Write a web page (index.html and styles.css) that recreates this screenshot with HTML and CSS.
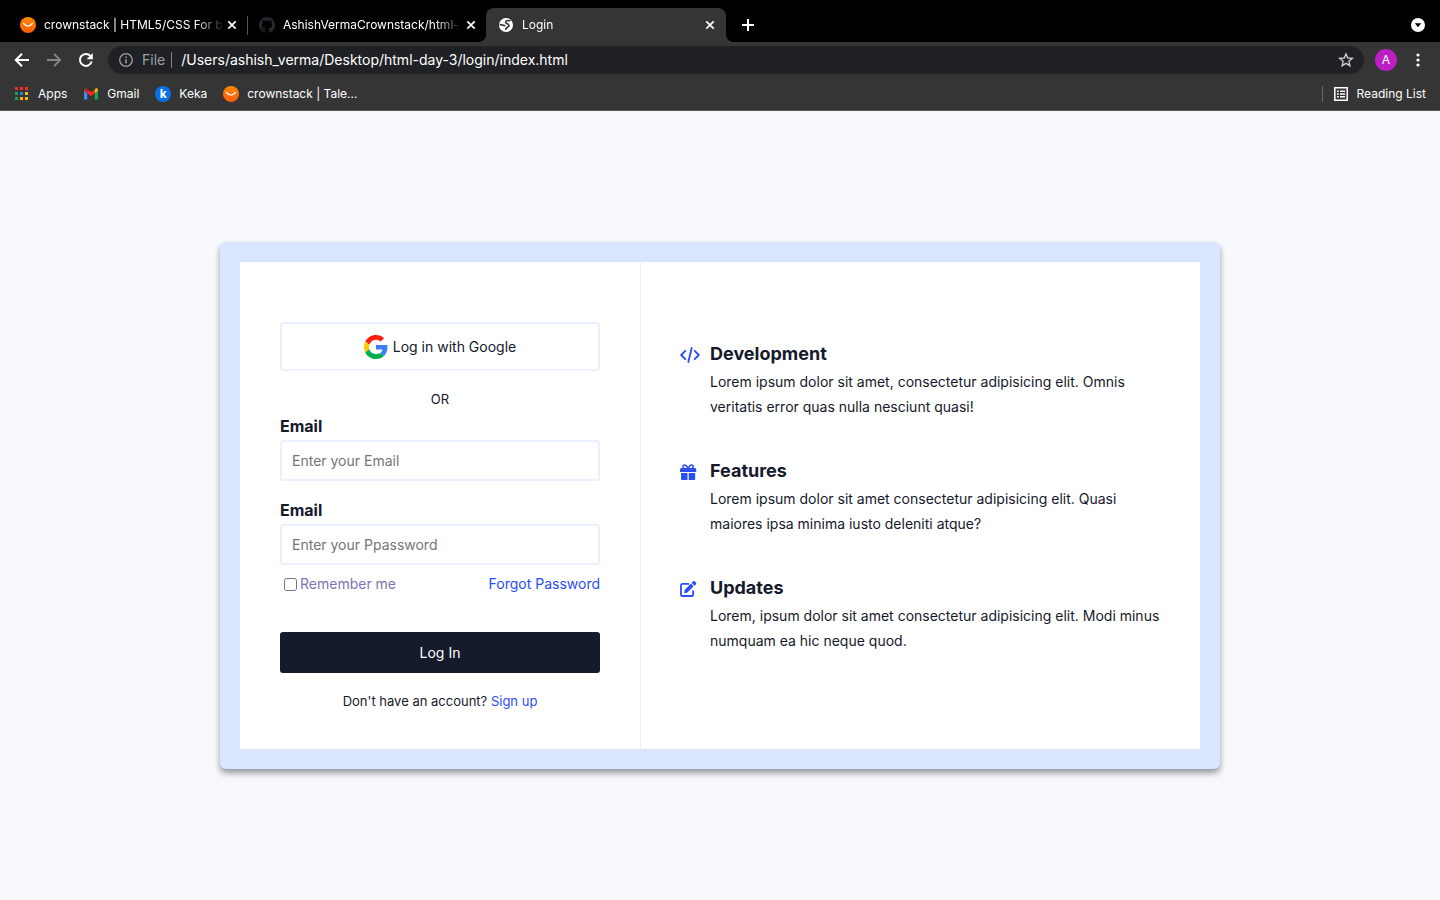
FILE: index.html
```html
<!DOCTYPE html>
<html lang="en">
<head>
<meta charset="utf-8">
<title>Login</title>
<link rel="stylesheet" href="styles.css">
</head>
<body>
<svg class="defs" width="0" height="0" aria-hidden="true">
  <defs>
    <linearGradient id="orange" x1="0" y1="0" x2="0" y2="1"><stop offset="0" stop-color="#ff8a00"/><stop offset="1" stop-color="#ff5a08"/></linearGradient>
    <symbol id="crown" viewBox="0 0 16 16"><circle cx="8" cy="8" r="8" fill="url(#orange)"/><path d="M3.600 6.500Q8 11.600 12.400 6.500" fill="none" stroke="#fff" stroke-width="1.300" stroke-linecap="round"/></symbol>
    <symbol id="close" viewBox="0 0 10 10"><path d="M1.300 1.300l7.400 7.400M8.700 1.300L1.300 8.700" stroke="currentColor" stroke-width="1.700" fill="none"/></symbol>
  </defs>
</svg>

<header class="browser">
  <div class="tabs">
    <div class="tab">
      <svg class="icon-16"><use href="#crown"/></svg>
      <span class="tab-title">crownstack | HTML5/CSS For b</span>
      <button class="bare" aria-label="Close tab"><svg class="icon-10"><use href="#close"/></svg></button>
    </div>
    <div class="tab tab-divided">
      <svg class="icon-16" viewBox="0 0 16 16"><path fill="#24292e" d="M8 0C3.580 0 0 3.580 0 8c0 3.540 2.290 6.530 5.470 7.590.4.070.55-.17.55-.38 0-.19-.01-.82-.01-1.490-2.010.37-2.530-.49-2.690-.94-.09-.23-.48-.94-.82-1.130-.28-.15-.68-.52-.01-.53.63-.01 1.080.58 1.230.82.72 1.210 1.870.87 2.330.66.07-.52.28-.87.51-1.070-1.780-.2-3.640-.89-3.640-3.950 0-.87.31-1.590.82-2.150-.08-.2-.36-1.020.08-2.120 0 0 .67-.21 2.200.82.64-.18 1.320-.27 2-.27s1.360.09 2 .27c1.530-1.040 2.200-.82 2.200-.82.44 1.100.16 1.920.08 2.120.51.56.82 1.270.82 2.150 0 3.070-1.870 3.750-3.650 3.950.29.25.54.73.54 1.480 0 1.070-.01 1.930-.01 2.200 0 .21.15.46.55.38A8.010 8.010 0 0 0 16 8c0-4.420-3.580-8-8-8z"/></svg>
      <span class="tab-title">AshishVermaCrownstack/html-</span>
      <button class="bare" aria-label="Close tab"><svg class="icon-10"><use href="#close"/></svg></button>
    </div>
    <div class="tab tab-active">
      <svg class="icon-16" viewBox="0 0 16 16"><circle cx="8" cy="8" r="7" fill="#fff"/><path d="M11.800 3.800C9.600 3 7.400 4 7.600 5.400c.2 1.500 3.600 1.200 3.400 3.200-.2 1.900-2.500 1.300-3.300 3.600" fill="none" stroke="#353535" stroke-width="1.600" stroke-linecap="round"/><path d="M2.400 7.600c1.600-.2 2 .9 4.200 1" fill="none" stroke="#353535" stroke-width="1.800" stroke-linecap="round"/></svg>
      <span class="tab-title">Login</span>
      <button class="bare" aria-label="Close tab"><svg class="icon-10"><use href="#close"/></svg></button>
    </div>
    <button class="bare new-tab" aria-label="New tab"><svg class="icon-12" viewBox="0 0 12 12"><path d="M6 0v12M0 6h12" stroke="#fff" stroke-width="2"/></svg></button>
    <button class="bare tab-search" aria-label="Search tabs"><svg class="icon-14" viewBox="0 0 14 14"><circle cx="7" cy="7" r="7" fill="#fff"/><path d="M3.800 5.200h6.400L7 9.200z" fill="#000"/></svg></button>
  </div>

  <div class="toolbar">
    <div class="nav-buttons">
      <button class="bare" aria-label="Back"><svg class="icon-16" viewBox="0 0 16 16"><path d="M15 8H2M8 1.800L1.800 8 8 14.200" fill="none" stroke="#fff" stroke-width="2"/></svg></button>
      <button class="bare" aria-label="Forward"><svg class="icon-16" viewBox="0 0 16 16"><path d="M1 8h13M8 1.800L14.200 8 8 14.200" fill="none" stroke="#868686" stroke-width="1.800"/></svg></button>
      <button class="bare" aria-label="Reload"><svg class="icon-16" viewBox="0 0 16 16"><path d="M13.700 9.500A6 6 0 1 1 12.500 4" fill="none" stroke="#fff" stroke-width="2"/><path d="M14.800 1v6.200H8.600z" fill="#fff"/></svg></button>
    </div>
    <div class="omnibox">
      <svg class="icon-14" viewBox="0 0 14 14"><circle cx="7" cy="7" r="6.300" fill="none" stroke="#9aa0a6" stroke-width="1.300"/><path d="M7 6.200v4.200M7 3.500v1.500" stroke="#9aa0a6" stroke-width="1.500"/></svg>
      <span class="scheme">File</span>
      <input class="url" type="text" aria-label="Address" value="/Users/ashish_verma/Desktop/html-day-3/login/index.html">
      <button class="bare" aria-label="Bookmark this page"><svg class="icon-16" viewBox="0 0 16 16"><path d="M8 1.900l1.800 4.100 4.500.4-3.400 2.900 1 4.400L8 11.400l-3.900 2.300 1-4.400-3.400-2.900 4.500-.4z" fill="none" stroke="#c8cacc" stroke-width="1.400"/></svg></button>
    </div>
    <button class="bare avatar" aria-label="Profile">A</button>
    <button class="bare" aria-label="Menu"><svg class="icon-14" viewBox="0 0 14 14" fill="#fff"><circle cx="7" cy="2" r="1.600"/><circle cx="7" cy="7" r="1.600"/><circle cx="7" cy="12" r="1.600"/></svg></button>
  </div>

  <nav class="bookmarks">
    <a href="#"><svg class="icon-16" viewBox="0 0 16 16"><path fill="#f22c1e" d="M1 1h3v3H1zM6 1h3v3H6zM11 1h3v3h-3z"/><path fill="#18a452" d="M1 6h3v3H1zM1 11h3v3H1z"/><path fill="#1685f8" d="M6 6h3v3H6z"/><path fill="#fcb900" d="M11 6h3v3h-3zM6 11h3v3H6zM11 11h3v3h-3z"/></svg>Apps</a>
    <a href="#"><svg class="icon-16" viewBox="0 0 16 16"><path fill="#4285f4" d="M1 4v8.500c0 .6.400 1 1 1h2.300V6.400z"/><path fill="#18a452" d="M15 4v8.500c0 .6-.4 1-1 1h-2.300V6.400z"/><path fill="#fbbc04" d="M11.700 3.400v3.900L15 4.800V3.900c0-1.500-1.700-2-2.500-1.200z"/><path fill="#c5221f" d="M1 4.800V3.900c0-1.500 1.700-2 2.500-1.200l.8.700v3.900z"/><path fill="#ff2b1c" d="M4.300 3.400L8 6.300l3.700-2.900v3.900L8 10.200 4.300 7.300z"/></svg>Gmail</a>
    <a href="#"><span class="keka" aria-hidden="true">k</span>Keka</a>
    <a href="#"><svg class="icon-16"><use href="#crown"/></svg>crownstack | Tale...</a>
    <a class="reading" href="#"><svg class="icon-14" viewBox="0 0 14 14"><path d="M.8.8h12.400v12.400H.8z" fill="none" stroke="#fff" stroke-width="1.500"/><path d="M3 4.200h1.800M3 7h1.800M3 9.800h1.800M6 4.200h5M6 7h5M6 9.800h5" stroke="#fff" stroke-width="1.500"/></svg>Reading List</a>
  </nav>
</header>

<main class="page">
  <div class="card">
    <form class="login">
      <button class="google" type="button">
        <svg class="icon-24" viewBox="0 0 48 48"><path fill="#ff1d0d" d="M24 9.500c3.540 0 6.710 1.220 9.210 3.600l6.850-6.850C35.900 2.380 30.470 0 24 0 14.620 0 6.510 5.380 2.560 13.220l7.980 6.190C12.430 13.720 17.740 9.500 24 9.500z"/><path fill="#3c7dfb" d="M46.980 24.550c0-1.570-.15-3.090-.38-4.550H24v9.020h12.940c-.58 2.960-2.260 5.480-4.780 7.180l7.730 6c4.510-4.180 7.090-10.360 7.090-17.650z"/><path fill="#ffc800" d="M10.530 28.590c-.48-1.450-.76-2.990-.76-4.590s.27-3.140.76-4.590l-7.980-6.190C.92 16.460 0 20.120 0 24c0 3.880.92 7.540 2.560 10.780l7.970-6.190z"/><path fill="#00b04c" d="M24 48c6.480 0 11.930-2.130 15.890-5.810l-7.730-6c-2.150 1.450-4.920 2.300-8.160 2.300-6.260 0-11.570-4.220-13.470-9.910l-7.980 6.190C6.510 42.620 14.620 48 24 48z"/></svg>
        Log in with Google
      </button>
      <p class="or">OR</p>
      <div class="field">
        <label for="email">Email</label>
        <input id="email" type="email" placeholder="Enter your Email">
      </div>
      <div class="field">
        <label for="password">Email</label>
        <input id="password" type="password" placeholder="Enter your Ppassword">
      </div>
      <div class="options">
        <label class="remember"><input type="checkbox">Remember me</label>
        <a href="#">Forgot Password</a>
      </div>
      <button class="submit" type="submit">Log In</button>
      <p class="signup">Don't have an account? <a href="#">Sign up</a></p>
    </form>

    <section class="features">
      <article class="feature">
        <svg class="feature-icon" viewBox="0 0 20 16"><path d="M5.300 3.800L1.200 8l4.100 4.200M14.700 3.800L18.800 8l-4.100 4.200M11.700 1L8.300 15" fill="none" stroke="currentColor" stroke-width="1.800" stroke-linecap="round" stroke-linejoin="round"/></svg>
        <div>
          <h3>Development</h3>
          <p>Lorem ipsum dolor sit amet, consectetur adipisicing elit. Omnis veritatis error quas nulla nesciunt quasi!</p>
        </div>
      </article>
      <article class="feature">
        <svg class="feature-icon" viewBox="0 0 20 16"><path fill="currentColor" d="M1 9h6.500v7H2a1 1 0 0 1-1-1zM8.700 9h6.500v6a1 1 0 0 1-1 1H8.700zM1.500 4h13.200A1.500 1.500 0 0 1 16.200 5.500V8H0V5.500A1.500 1.500 0 0 1 1.500 4z"/><path d="M8.100 4.500C7 2 5.900.9 4.500.9 2.600.9 2.400 3.800 4.100 4.500M8.100 4.500C9.200 2 10.300.9 11.700.9c1.900 0 2.100 2.900.4 3.600" fill="none" stroke="currentColor" stroke-width="1.500"/></svg>
        <div>
          <h3>Features</h3>
          <p>Lorem ipsum dolor sit amet consectetur adipisicing elit. Quasi maiores ipsa minima iusto deleniti atque?</p>
        </div>
      </article>
      <article class="feature">
        <svg class="feature-icon" viewBox="0 0 20 16"><path d="M9 2.900H2.300A1.300 1.300 0 0 0 1 4.200v9.500A1.300 1.300 0 0 0 2.300 15h9.500a1.300 1.300 0 0 0 1.300-1.300V9.500" fill="none" stroke="currentColor" stroke-width="1.800"/><path fill="currentColor" d="M10.900 2.500l2.700 2.700-6.500 6.500-2.900.5.400-3.200zM11.600 1.800l1.300-1.300a1.400 1.400 0 0 1 2 0l.9.900a1.400 1.400 0 0 1 0 2l-1.400 1.300z"/></svg>
        <div>
          <h3>Updates</h3>
          <p>Lorem, ipsum dolor sit amet consectetur adipisicing elit. Modi minus numquam ea hic neque quod.</p>
        </div>
      </article>
    </section>
  </div>
</main>
</body>
</html>
```
FILE: styles.css
```css
* { box-sizing: border-box; }

body {
  margin: 0;
  min-height: 100vh;
  display: flex;
  flex-direction: column;
  font-family: Inter, "Liberation Sans", sans-serif;
  font-size: 14px;
  line-height: 18px;
  color: #14192b;
  background: #f7f9fd;
}

p, h3 { margin: 0; }
a { color: #2a4df4; text-decoration: none; }
button, input { font: inherit; color: inherit; }
svg { display: block; flex: none; }

.defs { position: absolute; }
.icon-10 { width: 10px; height: 10px; }
.icon-12 { width: 12px; height: 12px; }
.icon-14 { width: 14px; height: 14px; }
.icon-16 { width: 16px; height: 16px; }
.icon-24 { width: 24px; height: 24px; }

.bare {
  display: block;
  flex: none;
  padding: 0;
  border: 0;
  background: none;
}

/* Browser window */
.browser {
  color: #fff;
  background: #353535;
  border-bottom: 1px solid #555;
  font-size: 12px;
}

.tabs {
  display: flex;
  align-items: center;
  padding: 8px 15px 0 8px;
  background: #000;
}

.tab {
  display: flex;
  align-items: center;
  width: 239px;
  height: 34px;
  padding: 0 10px 0 12px;
}

.tab-divided { background: linear-gradient(#555, #555) 0 8px / 1px 19px no-repeat; }

.tab-active {
  position: relative;
  width: 240px;
  padding-right: 11px;
  border-radius: 8px 8px 0 0;
  background: #353535;
}

.tab-active::before,
.tab-active::after {
  content: "";
  position: absolute;
  bottom: 0;
  width: 8px;
  height: 8px;
}

.tab-active::before { right: 100%; background: radial-gradient(circle at 0 0, #000 8px, #353535 8px); }
.tab-active::after { left: 100%; background: radial-gradient(circle at 100% 0, #000 8px, #353535 8px); }

.tab-title {
  flex: 1;
  margin-left: 8px;
  overflow: hidden;
  white-space: nowrap;
  mask-image: linear-gradient(to left, transparent 2px, #000 32px);
}

.new-tab { margin-left: 16px; }
.tab-search { margin-left: auto; }

.toolbar {
  display: flex;
  align-items: center;
  gap: 11px;
  height: 36px;
  padding: 0 15px 0 14px;
}

.nav-buttons { display: flex; gap: 16px; margin-right: 3px; }

.omnibox {
  flex: 1;
  display: flex;
  align-items: center;
  height: 28px;
  padding: 0 10px 0 11px;
  border-radius: 14px;
  background: #202124;
  font-size: 14px;
}

.scheme {
  margin: 0 9px;
  padding-right: 6px;
  border-right: 1px solid #80868b;
  line-height: 16px;
  color: #9aa0a6;
}

.url {
  flex: 1;
  padding: 0;
  border: 0;
  background: none;
  outline: 0;
}

.avatar {
  width: 22px;
  height: 22px;
  border-radius: 50%;
  background: #bb1fc4;
  text-align: center;
}

.toolbar > .bare:last-child { margin-left: 3px; }

.bookmarks {
  display: flex;
  align-items: center;
  gap: 16px;
  height: 32px;
  padding: 0 14px;
}

.bookmarks a { display: flex; align-items: center; gap: 8px; color: #fff; }

.keka {
  width: 16px;
  height: 16px;
  border-radius: 50%;
  background: #0871e8;
  font-weight: 700;
  line-height: 16px;
  text-align: center;
}

.bookmarks .reading {
  margin-left: auto;
  padding-left: 11px;
  border-left: 1px solid #666;
  line-height: 16px;
  gap: 9px;
}

/* Login page */
.page {
  flex: 1;
  display: flex;
  align-items: center;
  justify-content: center;
  padding: 20px;
}

.card {
  display: grid;
  grid-template-columns: 5fr 7fr;
  width: 100%;
  max-width: 1000px;
  border: 20px solid #dae5ff;
  border-radius: 6px;
  background: #fff;
  box-shadow: 0 4px 6px rgba(0, 0, 0, 0.4);
}

.login {
  display: flex;
  flex-direction: column;
  padding: 60px 40px 40px;
}

.google {
  display: flex;
  align-items: center;
  justify-content: center;
  gap: 5px;
  min-height: 49px;
  border: 2px solid #eaf0ff;
  border-radius: 3px;
  background: #fff;
}

.or {
  margin: 20px 0 10px;
  text-align: center;
  font-size: 13px;
  line-height: 16px;
}

.field { display: flex; flex-direction: column; gap: 5px; }
.field + .field { margin-top: 20px; }
.field label { font-size: 16px; font-weight: 700; }

.field input {
  height: 41px;
  padding: 0 10px;
  border: 2px solid #eaf0ff;
  border-radius: 3px;
  background: #fff;
}

.field input::placeholder { color: #757575; }

.options {
  display: flex;
  justify-content: space-between;
  margin: 10px 0 39px;
}

.remember { display: flex; align-items: center; gap: 3px; color: #7a75b3; }
.remember input { width: 13px; height: 13px; margin: 0 0 0 4px; }

.submit {
  height: 41px;
  border: 0;
  border-radius: 3px;
  background: #151a2d;
  color: #fff;
}

.signup {
  margin-top: 20px;
  text-align: center;
  font-size: 13px;
  line-height: 16px;
}

.features {
  display: flex;
  flex-direction: column;
  gap: 39px;
  padding: 79px 30px 40px 39px;
  border-left: 1px solid #eaf0ff;
}

.feature { display: flex; gap: 10px; }
.feature-icon { width: 20px; height: 16px; margin-top: 6px; color: #2a4df4; }
.feature h3 { margin-bottom: 2px; font-size: 18px; line-height: 26px; font-weight: 700; }
.feature p { line-height: 25px; }
```
